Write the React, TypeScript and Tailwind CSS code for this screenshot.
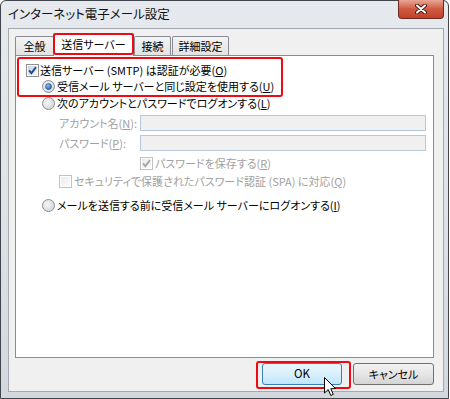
import React from 'react'

function CheckBox({ checked, disabled }: { checked?: boolean; disabled?: boolean }) {
  return (
    <svg width="13" height="13" viewBox="0 0 13 13" className="shrink-0">
      <defs>
        <linearGradient id={disabled ? 'cbd' : 'cb'} x1="0" y1="0" x2="1" y2="1">
          <stop offset="0" stopColor={disabled ? '#ececec' : '#cbd0d6'} />
          <stop offset="1" stopColor={disabled ? '#fafafa' : '#f7f7f7'} />
        </linearGradient>
      </defs>
      <rect x="0.5" y="0.5" width="12" height="12" fill="#fff" stroke={disabled ? '#c2c2c2' : '#8e8f8f'} />
      <rect x="2" y="2" width="9" height="9" fill={`url(#${disabled ? 'cbd' : 'cb'})`} />
      {checked && (
        <path d="M3 6.3 L5.4 9.2 L10 3.2" fill="none" stroke={disabled ? '#a8a8a8' : '#1f4b9c'} strokeWidth="1.9" />
      )}
    </svg>
  )
}

function Radio({ checked, disabled }: { checked?: boolean; disabled?: boolean }) {
  return (
    <svg width="13" height="13" viewBox="0 0 13 13" className="shrink-0">
      <defs>
        <radialGradient id="rb" cx="0.4" cy="0.4" r="0.7">
          <stop offset="0" stopColor="#f6f6f6" />
          <stop offset="1" stopColor="#cfd3d8" />
        </radialGradient>
        <radialGradient id="rdot" cx="0.4" cy="0.35" r="0.7">
          <stop offset="0" stopColor="#8fc2f0" />
          <stop offset="1" stopColor="#1a57a8" />
        </radialGradient>
      </defs>
      <circle cx="6.5" cy="6.5" r="6" fill="url(#rb)" stroke={disabled ? '#bdbdbd' : '#8e8f8f'} />
      {checked && <circle cx="6.5" cy="6.5" r="3" fill="url(#rdot)" stroke="#1c4f8f" strokeWidth="0.6" />}
    </svg>
  )
}

function Key({ k }: { k: string }) {
  return <span className="underline underline-offset-[1px]">{k}</span>
}

export default function App() {
  return (
    <div className="h-[399px] w-[450px] bg-white font-['Noto_Sans_CJK_JP','Noto_Sans',sans-serif] text-[11px] leading-none text-black [font-feature-settings:'palt']">
      <div className="flex h-full w-[449px] flex-col rounded-t-[6px] border border-[#40454b] bg-gradient-to-b from-[#e6e9ed] via-[#dfe3e8] to-[#d3d8de] pb-[6px] pl-[7px] pr-[4px]">
        {/* Title bar */}
        <div className="flex h-[27px] items-start justify-between">
          <span className="mt-[7px] text-[12.5px] text-[#111]">インターネット電子メール設定</span>
          <div className="-mt-[1px] flex h-[19px] w-[46px] items-center justify-center rounded-b-[4px] border border-t-0 border-[#6b2a20] bg-gradient-to-b from-[#e9a594] via-[#cf5a42] to-[#c3402a]">
            <svg width="12" height="10" viewBox="0 0 12 10">
              <path d="M2 1.5 L10 8.5 M10 1.5 L2 8.5" stroke="#4a1a12" strokeWidth="4" strokeLinecap="round" />
              <path d="M2 1.5 L10 8.5 M10 1.5 L2 8.5" stroke="#fff" strokeWidth="2" strokeLinecap="round" />
            </svg>
          </div>
        </div>

        {/* Content */}
        <div className="flex flex-1 flex-col border border-[#a4a9b0] bg-[#f0f0f0] pl-[6px] pr-[9px] pt-[4px]">
          {/* Tabs */}
          <div className="flex h-[22px] items-end">
            <div className="flex h-[19px] w-[39px] items-center justify-center rounded-t-[2px] border border-b-0 border-[#898c95] bg-gradient-to-b from-[#f3f3f3] to-[#e3e3e3]">
              全般
            </div>
            <div className="relative z-10 -mb-[1px] -ml-[1px] flex h-[23px] w-[81px] items-center justify-center rounded-t-[2px] border border-b-0 border-[#898c95] bg-white pb-[2px]">
              送信サーバー
              <div className="absolute -left-[1px] -right-[1px] -top-[1px] bottom-[1px] rounded-[3px] border-2 border-[#ee0a12]" />
            </div>
            <div className="flex h-[19px] w-[37px] items-center justify-center rounded-t-[2px] border border-b-0 border-[#898c95] bg-gradient-to-b from-[#f3f3f3] to-[#e3e3e3]">
              接続
            </div>
            <div className="ml-[1px] flex h-[19px] w-[57px] items-center justify-center rounded-t-[2px] border border-b-0 border-[#898c95] bg-gradient-to-b from-[#f3f3f3] to-[#e3e3e3]">
              詳細設定
            </div>
          </div>

          {/* Tab panel */}
          <div className="flex h-[303px] flex-col border border-[#898c95] bg-white">
            <div className="ml-[1px] mt-[1px] h-[40px] w-[266px] rounded-[3px] border-2 border-[#ee0a12] pl-[7px] pt-[3px]">
              <div className="flex h-[16px] items-center">
                <CheckBox checked />
                <span className="ml-[1px]">送信サーバー (SMTP) は認証が必要(<Key k="O" />)</span>
              </div>
              <div className="flex h-[16px] items-center pl-[16px]">
                <Radio checked />
                <span className="ml-[2px]">受信メール サーバーと同じ設定を使用する(<Key k="U" />)</span>
              </div>
            </div>

            <div className="-mt-[2px] flex h-[16px] items-center pl-[26px]">
              <Radio />
              <span className="ml-[2px]">次のアカウントとパスワードでログオンする(<Key k="L" />)</span>
            </div>

            <div className="mt-[4px] flex h-[16px] items-center pl-[43px] text-[#a0a0a0]">
              <span className="w-[81px]">アカウント名(<Key k="N" />):</span>
              <div className="h-[16px] w-[286px] border border-[#b7c8db] bg-[#f0f0f0]" />
            </div>
            <div className="mt-[4px] flex h-[16px] items-center pl-[43px] text-[#a0a0a0]">
              <span className="w-[81px]">パスワード(<Key k="P" />):</span>
              <div className="h-[16px] w-[286px] border border-[#b7c8db] bg-[#f0f0f0]" />
            </div>

            <div className="mt-[5px] flex h-[14px] items-center pl-[124px] text-[#a0a0a0]">
              <CheckBox checked disabled />
              <span className="ml-[2px]">パスワードを保存する(<Key k="R" />)</span>
            </div>
            <div className="mt-[4px] flex h-[14px] items-center pl-[43px] text-[#a0a0a0]">
              <CheckBox disabled />
              <span className="ml-[2px]">セキュリティで保護されたパスワード認証 (SPA) に対応(<Key k="Q" />)</span>
            </div>

            <div className="mt-[10px] flex h-[14px] items-center pl-[26px]">
              <Radio />
              <span className="ml-[2px]">メールを送信する前に受信メール サーバーにログオンする(<Key k="I" />)</span>
            </div>
          </div>

          {/* Buttons */}
          <div className="mt-[5px] flex h-[22px] justify-end gap-[11px]">
            <div className="relative flex h-[22px] w-[80px] items-center justify-center rounded-[3px] border border-[#3c7fb1] bg-gradient-to-b from-[#eaf6fd] via-[#d9f0fc] to-[#bee6fd] text-[11.5px]">
              OK
              <div className="absolute -left-[7px] -top-[3px] h-[28px] w-[95px] rounded-[3px] border-2 border-[#ee0a12]" />
              <svg width="13" height="20" viewBox="0 0 13 20" className="absolute left-[61px] top-[13px]">
                <path d="M0.5 0.5 L0.5 16 L4.2 12.5 L6.8 18.5 L9.3 17.4 L6.8 11.7 L11.6 11.7 Z" fill="#fff" stroke="#000" strokeLinejoin="round" />
              </svg>
            </div>
            <div className="flex h-[22px] w-[81px] items-center justify-center rounded-[3px] border border-[#707070] bg-gradient-to-b from-[#f2f2f2] via-[#e6e6e6] to-[#d4d4d4]">
              キャンセル
            </div>
          </div>
        </div>
      </div>
    </div>
  )
}
